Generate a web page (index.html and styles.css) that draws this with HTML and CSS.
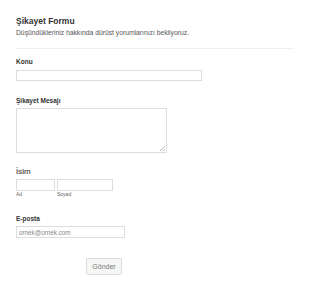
FILE: index.html
```html
<html>
    <head>
        <meta charset="utf-8" />
        <title>Şikayet Formu</title>
        <link rel="stylesheet" href="styles.css">
    </head>
    <body>
        <form class="form">
            <div class="header">
                <h1 class="title">Şikayet Formu</h1>
                <p class="subtitle">Düşündükleriniz hakkında dürüst yorumlarınızı bekliyoruz.</p>
            </div>
            <div class="field field-konu">
                <label class="label">Konu</label>
                <input type="text" class="input input-konu">
            </div>
            <div class="field field-mesaj">
                <label class="label">Şikayet Mesajı</label>
                <textarea class="textarea"></textarea>
            </div>
            <div class="field field-isim">
                <label class="label label-isim">İsim</label>
                <div class="name-row">
                    <div class="name-col">
                        <input type="text" class="input input-ad">
                        <span class="sublabel">Ad</span>
                    </div>
                    <div class="name-col">
                        <input type="text" class="input input-soyad">
                        <span class="sublabel">Soyad</span>
                    </div>
                </div>
            </div>
            <div class="field field-eposta">
                <label class="label">E-posta</label>
                <input type="text" class="input input-eposta" placeholder="ornek@ornek.com">
            </div>
            <div class="actions">
                <button type="button" class="button">Gönder</button>
            </div>
        </form>
    </body>
</html>
```

FILE: styles.css
```css
body {
    margin: 0;
    font-family: "Liberation Sans", Arial, sans-serif;
    background: #fff;
    color: #333;
}
.form {
    padding: 16px 16px 0 16px;
    width: 278px;
}
.header {
    border-bottom: solid 1px #f0f0f0;
    padding-bottom: 11px;
}
.title {
    margin: 0;
    font-size: 8.5px;
    font-weight: bold;
    color: #333;
    line-height: 10px;
}
.subtitle {
    margin: 2px 0 0 0;
    font-size: 6.75px;
    color: #555;
    line-height: 9px;
}
.field {
    display: flex;
    flex-direction: column;
    align-items: flex-start;
}
.label {
    display: block;
    font-size: 6.5px;
    font-weight: bold;
    color: #333;
    line-height: 9px;
}
.field-konu {
    margin-top: 8px;
}
.field-konu .label {
    margin-bottom: 4px;
}
.field-mesaj {
    margin-top: 15px;
}
.field-mesaj .label {
    margin-bottom: 3px;
}
.field-isim {
    margin-top: 14px;
}
.label-isim {
    font-size: 8px;
    font-weight: normal;
    color: #5a524c;
    line-height: 10px;
    margin-bottom: 2px;
    -webkit-text-stroke: 0.2px #5a524c;
}
.field-eposta {
    margin-top: 17px;
}
.field-eposta .label {
    margin-bottom: 3px;
}
.input {
    box-sizing: border-box;
    height: 11px;
    border: solid 1px #ddd;
    padding: 0 2px;
    margin: 0;
    font-family: "Liberation Sans", Arial, sans-serif;
    font-size: 6.3px;
    color: #555;
    background: #fff;
}
.input::placeholder {
    color: #888;
}
.input-konu {
    width: 186px;
}
.textarea {
    box-sizing: border-box;
    width: 151px;
    height: 45px;
    border: solid 1px #ddd;
    margin: 0;
    padding: 2px;
    resize: none;
    background: #fff linear-gradient(135deg, transparent 45%, #bbb 45%, #bbb 58%, transparent 58%, transparent 72%, #bbb 72%, #bbb 85%, transparent 85%) no-repeat right 1px bottom 1px / 5px 5px;
}
.name-row {
    display: flex;
    gap: 2px;
}
.name-col {
    display: flex;
    flex-direction: column;
}
.input-ad {
    width: 39px;
    height: 12px;
}
.input-soyad {
    width: 56px;
    height: 12px;
}
.sublabel {
    font-size: 5px;
    color: #666;
    line-height: 6px;
}
.input-eposta {
    width: 109px;
    height: 12px;
}
.actions {
    margin-top: 20px;
    padding-left: 70px;
}
.button {
    width: 36px;
    height: 17px;
    border: solid 1px #ddd;
    border-radius: 1px;
    background: #f6f6f6;
    color: #777;
    font-family: "Liberation Sans", Arial, sans-serif;
    font-size: 7px;
    padding: 0;
}
```
